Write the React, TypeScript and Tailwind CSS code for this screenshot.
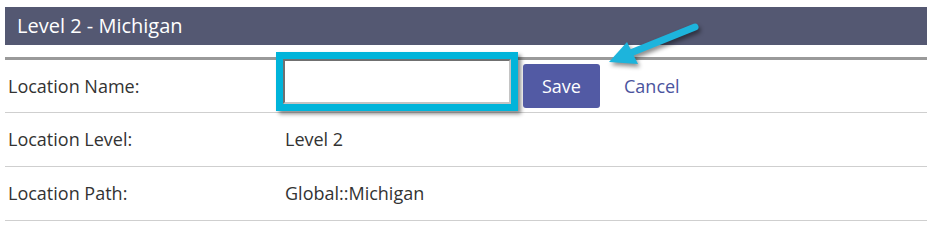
export default function App() {
  const rows = [
    { label: "Location Level:", value: "Level 2" },
    { label: "Location Path:", value: "Global::Michigan" },
  ]

  return (
    <div
      className="relative w-[932px] h-[224px] bg-white pt-[7px] px-[5px]"
      style={{ fontFamily: '"Open Sans", "Liberation Sans", sans-serif' }}
    >
      {/* Header */}
      <div className="h-[38px] bg-[#545872] flex items-center pl-[12px]">
        <h2 className="text-[20px] text-white leading-none">Level 2 - Michigan</h2>
      </div>

      {/* Table */}
      <div className="mt-[12px] border-t-[3px] border-[#9a9a9a]">
        <div className="h-[53px] flex items-center border-b border-[#cfcfcf] text-[18px] text-[#333]">
          <div className="w-[271px] pl-[3px]">Location Name:</div>
          <div className="self-start -mt-[8px] border-[7px] border-[#00b4da] shadow-[3px_3px_4px_rgba(0,0,0,0.45)]">
            <input
              type="text"
              className="block w-[228px] h-[45px] bg-white border-2 border-t-[#707070] border-l-[#707070] border-r-[#c4c4c4] border-b-[#c4c4c4] outline-none"
            />
          </div>
          <button className="ml-[5px] w-[77px] h-[44px] rounded-[3px] bg-[#525aa4] text-white text-[18px]">
            Save
          </button>
          <a className="ml-[24px] text-[18px] text-[#4b549e] font-medium cursor-pointer">Cancel</a>
        </div>

        {rows.map((row) => (
          <div
            key={row.label}
            className="h-[54px] flex items-center border-b border-[#cfcfcf] text-[18px] text-[#333]"
          >
            <div className="w-[280px] pl-[3px]">{row.label}</div>
            <div>{row.value}</div>
          </div>
        ))}
      </div>

      {/* Annotation arrow */}
      <svg
        className="absolute left-[600px] top-[15px] drop-shadow-[2px_3px_2px_rgba(0,0,0,0.45)]"
        width="110"
        height="60"
        viewBox="600 15 110 60"
      >
        <line x1="695" y1="27" x2="628" y2="54" stroke="#1db4dc" strokeWidth="7" strokeLinecap="round" />
        <polygon points="609,62 627,42 638,64" fill="#1db4dc" />
      </svg>
    </div>
  )
}
